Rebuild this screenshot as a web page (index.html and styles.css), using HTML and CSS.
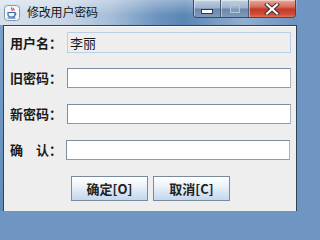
FILE: index.html
```html
<!DOCTYPE html>
<html lang="zh-CN">
<head>
<meta charset="utf-8">
<title>修改用户密码</title>
<link rel="stylesheet" href="styles.css">
</head>
<body>
<div class="window">
  <div class="titlebar">
    <svg class="app-icon" width="16" height="16" viewBox="0 0 16 16">
      <rect x="0.5" y="0.5" width="15" height="15" rx="3" fill="#f4f6f8" stroke="#8a96a4"/>
      <path d="M8 2.5c-1.5 1.2 1.2 2 0 3.5M9.8 3.2c-1 0.8 0.8 1.4 0 2.4" fill="none" stroke="#d2352b" stroke-width="1.1"/>
      <path d="M4 7.5h7v2.2c0 1.4-1.3 2.3-3.5 2.3S4 11.1 4 9.7z" fill="none" stroke="#2a63b0" stroke-width="1.1"/>
      <path d="M11 8.2c1.4 0 1.4 1.8 0 1.8" fill="none" stroke="#2a63b0" stroke-width="0.9"/>
      <path d="M3.5 13h8" stroke="#2a63b0" stroke-width="1"/>
    </svg>
    <span class="title">修改用户密码</span>
    <div class="caption-buttons">
      <div class="cb cb-min"><span class="min-glyph"></span></div>
      <div class="cb cb-max"><span class="max-glyph"></span></div>
      <div class="cb cb-close">
        <svg width="16" height="12" viewBox="0 0 16 12">
          <path d="M3 1.5l10 9M13 1.5l-10 9" stroke="#3a2a2a" stroke-width="4" stroke-linecap="square"/>
          <path d="M3 1.5l10 9M13 1.5l-10 9" stroke="#ffffff" stroke-width="2.2" stroke-linecap="square"/>
        </svg>
      </div>
    </div>
  </div>
  <div class="content">
    <div class="row">
      <span class="label label-smooth">用户名：</span>
      <div class="field field-readonly">李丽</div>
    </div>
    <div class="row">
      <span class="label">旧密码：</span>
      <div class="field"></div>
    </div>
    <div class="row">
      <span class="label">新密码：</span>
      <div class="field"></div>
    </div>
    <div class="row">
      <span class="label">确　认：</span>
      <div class="field field-shift"></div>
    </div>
    <div class="buttons">
      <button class="btn">确定[O]</button>
      <button class="btn">取消[C]</button>
    </div>
  </div>
</div>
</body>
</html>
```
FILE: styles.css
```css
html, body {
  margin: 0;
  padding: 0;
  background: #6f95c2;
}

.window {
  width: 297px;
  height: 211px;
  display: flex;
  flex-direction: column;
  background: linear-gradient(to bottom, #7fa3cc, #5f8bbd);
  font-family: "Noto Sans CJK SC", "Noto Sans", sans-serif;
  overflow: hidden;
}

.titlebar {
  height: 25px;
  flex: none;
  display: flex;
  align-items: flex-start;
  background:
    linear-gradient(to bottom, rgba(255,255,255,0.35), rgba(255,255,255,0) 60%),
    linear-gradient(to right, #d6e1ec 0%, #c7d5e5 22%, #a3bcd7 38%, #6f95c0 52%, #5a85b5 62%, #7e9ec5 74%, #92afd0 82%, #6d92bd 100%);
}

.app-icon {
  flex: none;
  margin: 5px 0 0 4px;
}

.title {
  margin: 4px 0 0 7px;
  font-size: 12px;
  line-height: 16px;
  color: #101820;
  letter-spacing: -0.2px;
}

.caption-buttons {
  margin-left: auto;
  margin-right: 1px;
  display: flex;
  height: 17px;
  border: 1px solid #3b4c60;
  border-top: none;
  border-radius: 0 0 4px 4px;
  overflow: hidden;
}

.cb {
  height: 17px;
  display: flex;
  align-items: center;
  justify-content: center;
  box-shadow: inset 1px 1px 0 rgba(255,255,255,0.45);
}

.cb-min {
  width: 27px;
  border-right: 1px solid #4a5d74;
  background: linear-gradient(to bottom, #c2d2e3 0%, #9cb2cc 45%, #6b88aa 55%, #7f9cbd 100%);
  align-items: flex-end;
  padding-bottom: 3px;
  box-sizing: border-box;
}

.min-glyph {
  width: 10px;
  height: 3px;
  background: #ffffff;
  border: 1px solid #2c3a4a;
}

.cb-max {
  width: 27px;
  border-right: 1px solid #4a5d74;
  background: linear-gradient(to bottom, #c2d2e3 0%, #9cb2cc 45%, #6b88aa 55%, #7f9cbd 100%);
}

.max-glyph {
  width: 8px;
  height: 6px;
  border: 1px solid #b7c6d6;
  border-top-width: 2px;
  background: rgba(160,180,205,0.4);
}

.cb-close {
  width: 46px;
  background: linear-gradient(to bottom, #e9a99b 0%, #d66f5a 40%, #c0392a 55%, #d24e38 85%, #e0735c 100%);
}

.content {
  flex: none;
  height: 181px;
  margin: 0 0 3px 3px;
  width: 292px;
  border: 1px solid #2f4256;
  background: #eeeeee;
  box-shadow: inset 0 1px 0 #f8fafc;
  display: flex;
  flex-direction: column;
  padding: 6px 0 0 0;
  box-sizing: content-box;
}

.row {
  display: flex;
  align-items: center;
  height: 20px;
  margin-bottom: 16px;
}

.row:first-child {
  height: 21px;
  margin-bottom: 15px;
}

.label {
  width: 57px;
  padding-left: 6px;
  flex: none;
  font-size: 13px;
  font-weight: 700;
  color: #1a1a1a;
  line-height: 16px;
  white-space: nowrap;
}

.field {
  width: 222px;
  height: 18px;
  flex: none;
  border: 1px solid #7f8e9e;
  border-right-color: #a9b5c2;
  border-bottom-color: #8d9aa8;
  background: #ffffff;
  font-size: 13px;
  line-height: 18px;
  padding: 0;
}

.field-readonly {
  height: 19px;
  line-height: 19px;
  background: #eeeeee;
  border: 1px solid #b8cfe4;
  padding-left: 2px;
  width: 220px;
  color: #1a1a1a;
}

.field-shift {
  margin-left: -1px;
}

.buttons {
  display: flex;
  justify-content: center;
  gap: 5px;
  padding-left: 1px;
}

.btn {
  width: 77px;
  height: 25px;
  margin: 0;
  padding: 0;
  border: 1px solid #7a8a9b;
  border-radius: 0;
  background: linear-gradient(to bottom, #ffffff 0%, #eef4fb 35%, #d6e4f3 70%, #c3d7ee 100%);
  font-family: "Noto Sans CJK SC", "Noto Sans", sans-serif;
  font-size: 13px;
  font-weight: 700;
  color: #222222;
  line-height: 23px;
}
```
